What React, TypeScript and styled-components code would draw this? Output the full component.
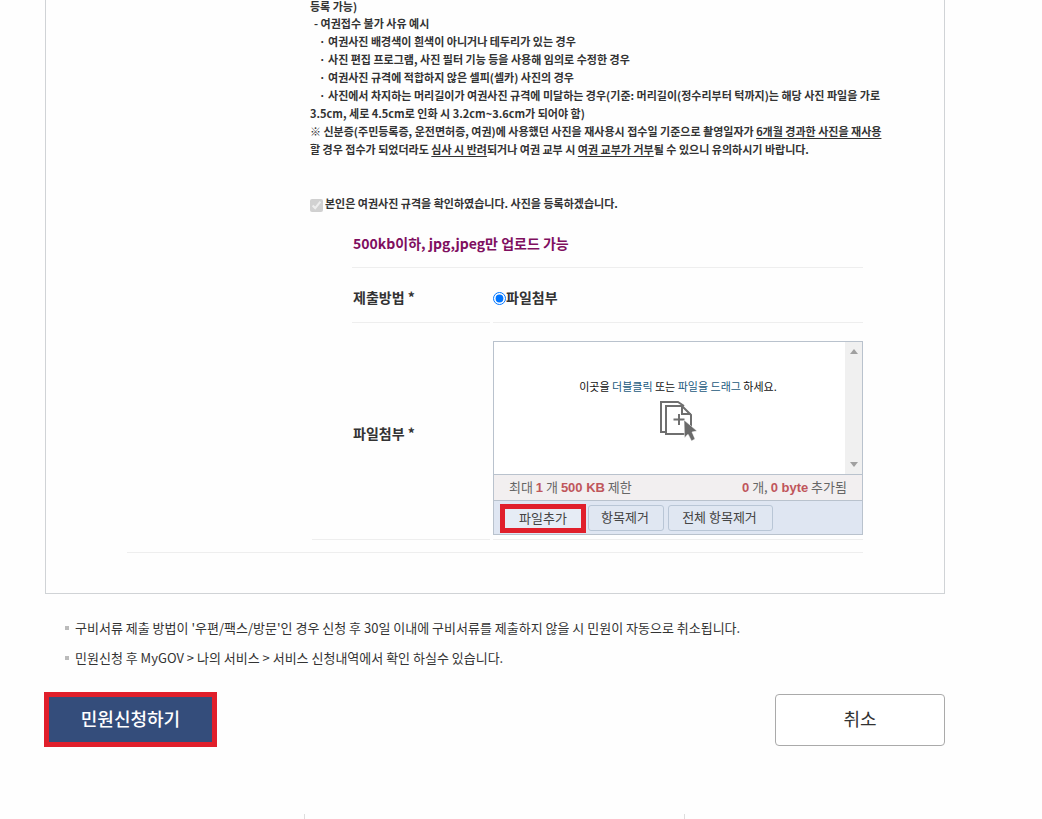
import React from 'react';
import styled, { createGlobalStyle } from 'styled-components';

const GlobalStyle = createGlobalStyle`
  *, *::before, *::after { box-sizing: border-box; }
  body {
    margin: 0;
    background: #fefefe;
    color: #333;
    font-family: "Noto Sans CJK KR", "Noto Sans", sans-serif;
  }
  button { font-family: inherit; cursor: pointer; }
`;

const Page = styled.main`
  margin: 0 97px 0 45px;
`;

const Panel = styled.section`
  padding: 0 81px 40px;
  border: 1px solid #d0d3d6;
  border-top: 0;
`;

const PanelRow = styled.div`
  display: grid;
  grid-template-columns: 183px minmax(0, 1fr);
  padding-bottom: 12px;
  border-bottom: 1px solid #eee;
`;

const PanelBody = styled.div`
  grid-column: 2;
`;

const Rules = styled.div`
  font-size: 11px;
  font-weight: 700;
  line-height: 18px;
  white-space: nowrap;
`;

const Rule = styled.p<{ $indent?: number }>`
  margin: 0;
  text-indent: ${({ $indent = 0 }) => $indent}px;

  &:first-child { margin-bottom: 2px; line-height: 12px; }
  u { text-underline-offset: 2px; }
`;

const Agree = styled.label`
  display: flex;
  align-items: center;
  gap: 2px;
  margin-top: 36px;
  font-size: 11px;
  font-weight: 700;
  line-height: 18px;

  input { width: 13px; height: 13px; margin: 4px 0 0; }
`;

const Fields = styled.div`
  padding-left: 42px;
`;

const Limit = styled.p`
  margin: 0;
  padding: 20px 0 13px 1px;
  border-bottom: 1px solid #eee;
  color: #7f0f5f;
  font-size: 14px;
  font-weight: 700;
  line-height: 22px;
`;

const FieldRow = styled.div<{ $height: number }>`
  display: grid;
  grid-template-columns: 138px minmax(0, 1fr);
  column-gap: 3px;
  height: ${({ $height }) => $height}px;
  font-size: 14px;
  font-weight: 700;
  line-height: 22px;
`;

const FieldCell = styled.div`
  display: flex;
  align-items: center;
  padding-top: 4px;
  border-bottom: 1px solid #eee;
`;

const FieldName = styled(FieldCell)`
  padding-left: 1px;
`;

const WideFieldName = styled(FieldName)`
  margin-left: -40px;
  padding-left: 41px;
`;

const UploadCell = styled(FieldCell)`
  align-items: flex-end;
  padding-bottom: 4px;
`;

const RadioLabel = styled.label`
  display: flex;
  align-items: center;

  input { width: 13px; height: 13px; margin: 2px 0 0; accent-color: #0075ff; }
`;

const Uploader = styled.div`
  width: 100%;
  border: 1px solid #b9c2cd;
  font-weight: 400;
`;

const DropArea = styled.div`
  display: flex;
  height: 132px;
  background: #fff;
`;

const DropMessage = styled.div`
  flex: 1;
  display: flex;
  flex-direction: column;
  align-items: center;
  padding: 34px 0 0 17px;
  color: #111;
  font-size: 11px;
  line-height: 20px;

  p { margin: 0 0 4px; }
  em { color: #235a80; font-style: normal; }
`;

const ScrollTrack = styled.div`
  display: flex;
  flex-direction: column;
  justify-content: space-between;
  align-items: center;
  width: 17px;
  padding: 7px 0;
  background: #f0f0f0;
`;

const StatusBar = styled.div`
  display: flex;
  justify-content: space-between;
  align-items: center;
  height: 27px;
  padding: 0 15px;
  border-top: 1px solid #b9c2cd;
  border-bottom: 1px solid #b9c2cd;
  background: #f2eff0;
  color: #666;
  font-size: 13px;
  line-height: 20px;

  b { color: #c0565b; font-family: "Liberation Sans", sans-serif; }
`;

const Toolbar = styled.div`
  display: flex;
  align-items: flex-start;
  gap: 4px;
  height: 33px;
  padding: 3px 6px 0;
  background: #dfe6f2;
`;

const ToolButton = styled.button<{ $width: number }>`
  width: ${({ $width }) => $width}px;
  height: 26px;
  margin-top: 1px;
  padding: 0 2px 2px 0;
  border: 1px solid #b9c6d6;
  border-radius: 3px;
  background: #e0e7f2;
  color: #444;
  font-size: 13px;
  line-height: 20px;
`;

const AddButton = styled(ToolButton)`
  height: 29px;
  margin: 0 -2px 0 0;
  padding: 0 0 2px;
  border: 5px solid #e01f2b;
  border-radius: 0;
  background: #e6ecf5;
  line-height: 17px;
`;

const Notes = styled.ul`
  margin: 19px 0 0;
  padding: 0 0 0 20px;
  list-style: none;
  font-size: 13px;
  line-height: 30px;

  li { display: flex; align-items: center; gap: 6px; }
  li::before { content: ""; width: 4px; height: 4px; background: #bbb; }
`;

const Actions = styled.div`
  display: flex;
  justify-content: space-between;
  align-items: center;
  margin: 19px 0 0 -1px;
`;

const ActionButton = styled.button`
  width: 170px;
  height: 52px;
  padding: 0 0 3px;
  border: 1px solid #aaa;
  border-radius: 4px;
  background: #fff;
  color: #333;
  font-size: 18px;
  line-height: 26px;
`;

const SubmitButton = styled(ActionButton)`
  width: 173px;
  height: 55px;
  border: 5px solid #e01f2b;
  border-radius: 0;
  background: #344d7b;
  color: #fff;
  font-weight: 500;
`;

const FooterColumns = styled.footer`
  display: grid;
  grid-template-columns: 260px 380px 1fr;
  height: 5px;
  margin-top: 67px;

  span { border-right: 1px solid #ddd; }
  span:last-child { border: 0; }
`;

const CopyIcon = () => (
  <svg width="38" height="42" viewBox="0 0 38 42" fill="none" aria-hidden="true">
    <path d="M6 32H2V2H19L25 6" stroke="#6f6f6f" strokeWidth="2" />
    <path d="M7 6H23L32 15V34H7Z" fill="#fff" stroke="#6f6f6f" strokeWidth="2" />
    <path d="M23 6V14H32" stroke="#6f6f6f" strokeWidth="2" />
    <path d="M20 14V25M14.500 19.500H25.500" stroke="#6f6f6f" strokeWidth="2" />
    <path d="M25 20L38 31L33 32L36 39L32.500 41L29 34L25.500 38Z" fill="#6a6a6a" stroke="#fff" strokeWidth=".5" />
  </svg>
);

const Arrow = ({ down = false }: { down?: boolean }) => (
  <svg width="8" height="5" viewBox="0 0 8 5" aria-hidden="true">
    <path d={down ? 'M0 0H8L4 5Z' : 'M0 5H8L4 0Z'} fill="#a0a0a0" />
  </svg>
);

export default function App() {
  return (
    <>
      <GlobalStyle />
      <Page>
        <Panel>
          <PanelRow>
            <PanelBody>
              <Rules>
                <Rule>등록 가능)</Rule>
                <Rule $indent={4}>- 여권접수 불가 사유 예시</Rule>
                <Rule $indent={9}>· 여권사진 배경색이 흰색이 아니거나 테두리가 있는 경우</Rule>
                <Rule $indent={9}>· 사진 편집 프로그램, 사진 필터 기능 등을 사용해 임의로 수정한 경우</Rule>
                <Rule $indent={9}>· 여권사진 규격에 적합하지 않은 셀피(셀카) 사진의 경우</Rule>
                <Rule $indent={9}>
                  · 사진에서 차지하는 머리길이가 여권사진 규격에 미달하는 경우(기준: 머리길이(정수리부터 턱까지)는 해당 사진 파일을 가로
                  <br />
                  3.5cm, 세로 4.5cm로 인화 시 3.2cm~3.6cm가 되어야 함)
                </Rule>
                <Rule>
                  ※ 신분증(주민등록증, 운전면허증, 여권)에 사용했던 사진을 재사용시 접수일 기준으로 촬영일자가 <u>6개월 경과한 사진을 재사용</u>
                  <br />
                  할 경우 접수가 되었더라도 <u>심사 시 반려</u>되거나 여권 교부 시 <u>여권 교부가 거부</u>될 수 있으니 유의하시기 바랍니다.
                </Rule>
              </Rules>
              <Agree>
                <input type="checkbox" checked disabled readOnly />
                본인은 여권사진 규격을 확인하였습니다. 사진을 등록하겠습니다.
              </Agree>
              <Fields>
                <Limit>500kb이하, jpg,jpeg만 업로드 가능</Limit>
                <FieldRow $height={55}>
                  <FieldName>제출방법 *</FieldName>
                  <FieldCell>
                    <RadioLabel>
                      <input type="radio" name="method" defaultChecked />
                      파일첨부
                    </RadioLabel>
                  </FieldCell>
                </FieldRow>
                <FieldRow $height={217}>
                  <WideFieldName>파일첨부 *</WideFieldName>
                  <UploadCell>
                    <Uploader>
                      <DropArea>
                        <DropMessage>
                          <p>이곳을 <em>더블클릭</em> 또는 <em>파일을 드래그</em> 하세요.</p>
                          <CopyIcon />
                        </DropMessage>
                        <ScrollTrack>
                          <Arrow />
                          <Arrow down />
                        </ScrollTrack>
                      </DropArea>
                      <StatusBar>
                        <span>최대 <b>1</b> 개 <b>500 KB</b> 제한</span>
                        <span><b>0</b> 개, <b>0 byte</b> 추가됨</span>
                      </StatusBar>
                      <Toolbar>
                        <AddButton type="button" $width={86}>파일추가</AddButton>
                        <ToolButton type="button" $width={76}>항목제거</ToolButton>
                        <ToolButton type="button" $width={105}>전체 항목제거</ToolButton>
                      </Toolbar>
                    </Uploader>
                  </UploadCell>
                </FieldRow>
              </Fields>
            </PanelBody>
          </PanelRow>
        </Panel>
        <Notes>
          <li>구비서류 제출 방법이 '우편/팩스/방문'인 경우 신청 후 30일 이내에 구비서류를 제출하지 않을 시 민원이 자동으로 취소됩니다.</li>
          <li>민원신청 후 MyGOV &gt; 나의 서비스 &gt; 서비스 신청내역에서 확인 하실수 있습니다.</li>
        </Notes>
        <Actions>
          <SubmitButton type="submit">민원신청하기</SubmitButton>
          <ActionButton type="button">취소</ActionButton>
        </Actions>
        <FooterColumns>
          <span />
          <span />
          <span />
        </FooterColumns>
      </Page>
    </>
  );
}
